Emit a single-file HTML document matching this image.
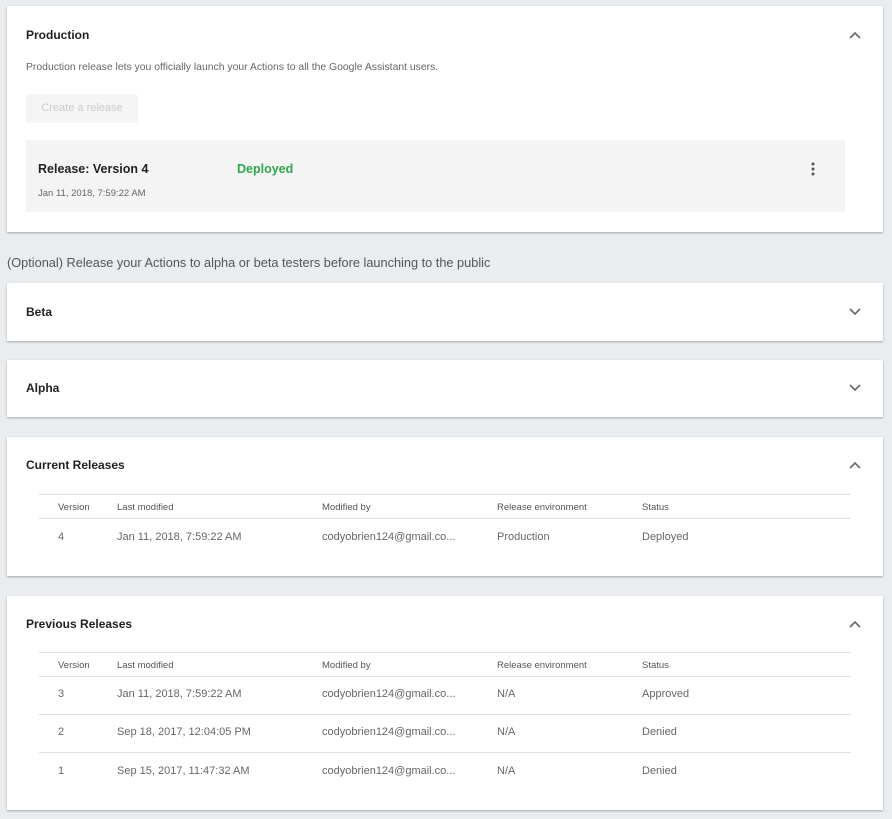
<!DOCTYPE html>
<html><head><style>
body{margin:0;width:892px;height:819px;background:#eaedf0;font-family:"Liberation Sans",sans-serif;position:relative;overflow:hidden}
.card{position:absolute;left:7px;width:876px;background:#fff;box-shadow:0 1px 2px rgba(0,0,0,.3)}
.t{position:absolute;left:19px;font-size:12px;font-weight:bold;color:#222}
.chev{position:absolute;right:22px;width:12px;height:8px}
.a{position:absolute;font-size:11px;color:#666;white-space:nowrap}
.h{position:absolute;font-size:9.5px;color:#555;white-space:nowrap}
.ln{position:absolute;left:32px;width:812px;height:1px;background:#e0e0e0}
</style></head><body>
<div class="card" style="top:6px;height:226px">
 <div class="t" style="top:22px">Production</div>
 <svg class="chev" style="top:25px" viewBox="0 0 12 8"><path d="M1 7L6 2L11 7" stroke="#666" stroke-width="1.6" fill="none"/></svg>
 <div class="a" style="left:19px;top:56px;font-size:10.4px;color:#666">Production release lets you officially launch your Actions to all the Google Assistant users.</div>
 <div style="position:absolute;left:19px;top:88px;width:112px;height:29px;background:#f5f5f5;border-radius:3px;color:#ccc;font-size:11px;line-height:29px;text-align:center">Create a release</div>
 <div style="position:absolute;left:19px;top:134px;width:819px;height:72px;background:#f4f4f4">
  <div style="position:absolute;left:12px;top:22px;font-size:12.5px;font-weight:bold;color:#222">Release: Version 4</div>
  <div style="position:absolute;left:211px;top:22px;font-size:12.5px;font-weight:bold;color:#2ea84a">Deployed</div>
  <div style="position:absolute;left:12px;top:48px;font-size:9.5px;color:#666">Jan 11, 2018, 7:59:22 AM</div>
  <svg style="position:absolute;left:785px;top:22px" width="4" height="14"><circle cx="2" cy="2" r="1.5" fill="#555"/><circle cx="2" cy="7" r="1.5" fill="#555"/><circle cx="2" cy="12" r="1.5" fill="#555"/></svg>
 </div>
</div>
<div style="position:absolute;left:7px;top:255px;font-size:12.75px;color:#555">(Optional) Release your Actions to alpha or beta testers before launching to the public</div>
<div class="card" style="top:283px;height:58px">
 <div class="t" style="top:22px">Beta</div>
 <svg class="chev" style="top:25px" viewBox="0 0 12 8"><path d="M1 1L6 6L11 1" stroke="#666" stroke-width="1.6" fill="none"/></svg>
</div>
<div class="card" style="top:360px;height:57px">
 <div class="t" style="top:21px">Alpha</div>
 <svg class="chev" style="top:24px" viewBox="0 0 12 8"><path d="M1 1L6 6L11 1" stroke="#666" stroke-width="1.6" fill="none"/></svg>
</div>
<div class="card" style="top:437px;height:139px">
 <div class="t" style="top:21px">Current Releases</div>
 <svg class="chev" style="top:24px" viewBox="0 0 12 8"><path d="M1 7L6 2L11 7" stroke="#666" stroke-width="1.6" fill="none"/></svg>
 <div class="ln" style="top:57px"></div>
 <div class="h" style="left:51px;top:65px">Version</div><div class="h" style="left:110px;top:65px">Last modified</div><div class="h" style="left:315px;top:65px">Modified by</div><div class="h" style="left:490px;top:65px">Release environment</div><div class="h" style="left:635px;top:65px">Status</div>
 <div class="ln" style="top:81px"></div>
 <div class="a" style="left:51px;top:94px">4</div><div class="a" style="left:110px;top:94px">Jan 11, 2018, 7:59:22 AM</div><div class="a" style="left:315px;top:94px">codyobrien124@gmail.co...</div><div class="a" style="left:490px;top:94px">Production</div><div class="a" style="left:635px;top:94px">Deployed</div>
</div>
<div class="card" style="top:596px;height:214px">
 <div class="t" style="top:21px">Previous Releases</div>
 <svg class="chev" style="top:24px" viewBox="0 0 12 8"><path d="M1 7L6 2L11 7" stroke="#666" stroke-width="1.6" fill="none"/></svg>
 <div class="ln" style="top:56px"></div>
 <div class="h" style="left:51px;top:64px">Version</div><div class="h" style="left:110px;top:64px">Last modified</div><div class="h" style="left:315px;top:64px">Modified by</div><div class="h" style="left:490px;top:64px">Release environment</div><div class="h" style="left:635px;top:64px">Status</div>
 <div class="ln" style="top:80px"></div>
 <div class="a" style="left:51px;top:92px">3</div><div class="a" style="left:110px;top:92px">Jan 11, 2018, 7:59:22 AM</div><div class="a" style="left:315px;top:92px">codyobrien124@gmail.co...</div><div class="a" style="left:490px;top:92px">N/A</div><div class="a" style="left:635px;top:92px">Approved</div>
 <div class="ln" style="top:118px"></div>
 <div class="a" style="left:51px;top:130px">2</div><div class="a" style="left:110px;top:130px">Sep 18, 2017, 12:04:05 PM</div><div class="a" style="left:315px;top:130px">codyobrien124@gmail.co...</div><div class="a" style="left:490px;top:130px">N/A</div><div class="a" style="left:635px;top:130px">Denied</div>
 <div class="ln" style="top:156px"></div>
 <div class="a" style="left:51px;top:169px">1</div><div class="a" style="left:110px;top:169px">Sep 15, 2017, 11:47:32 AM</div><div class="a" style="left:315px;top:169px">codyobrien124@gmail.co...</div><div class="a" style="left:490px;top:169px">N/A</div><div class="a" style="left:635px;top:169px">Denied</div>
</div>
</body></html>
